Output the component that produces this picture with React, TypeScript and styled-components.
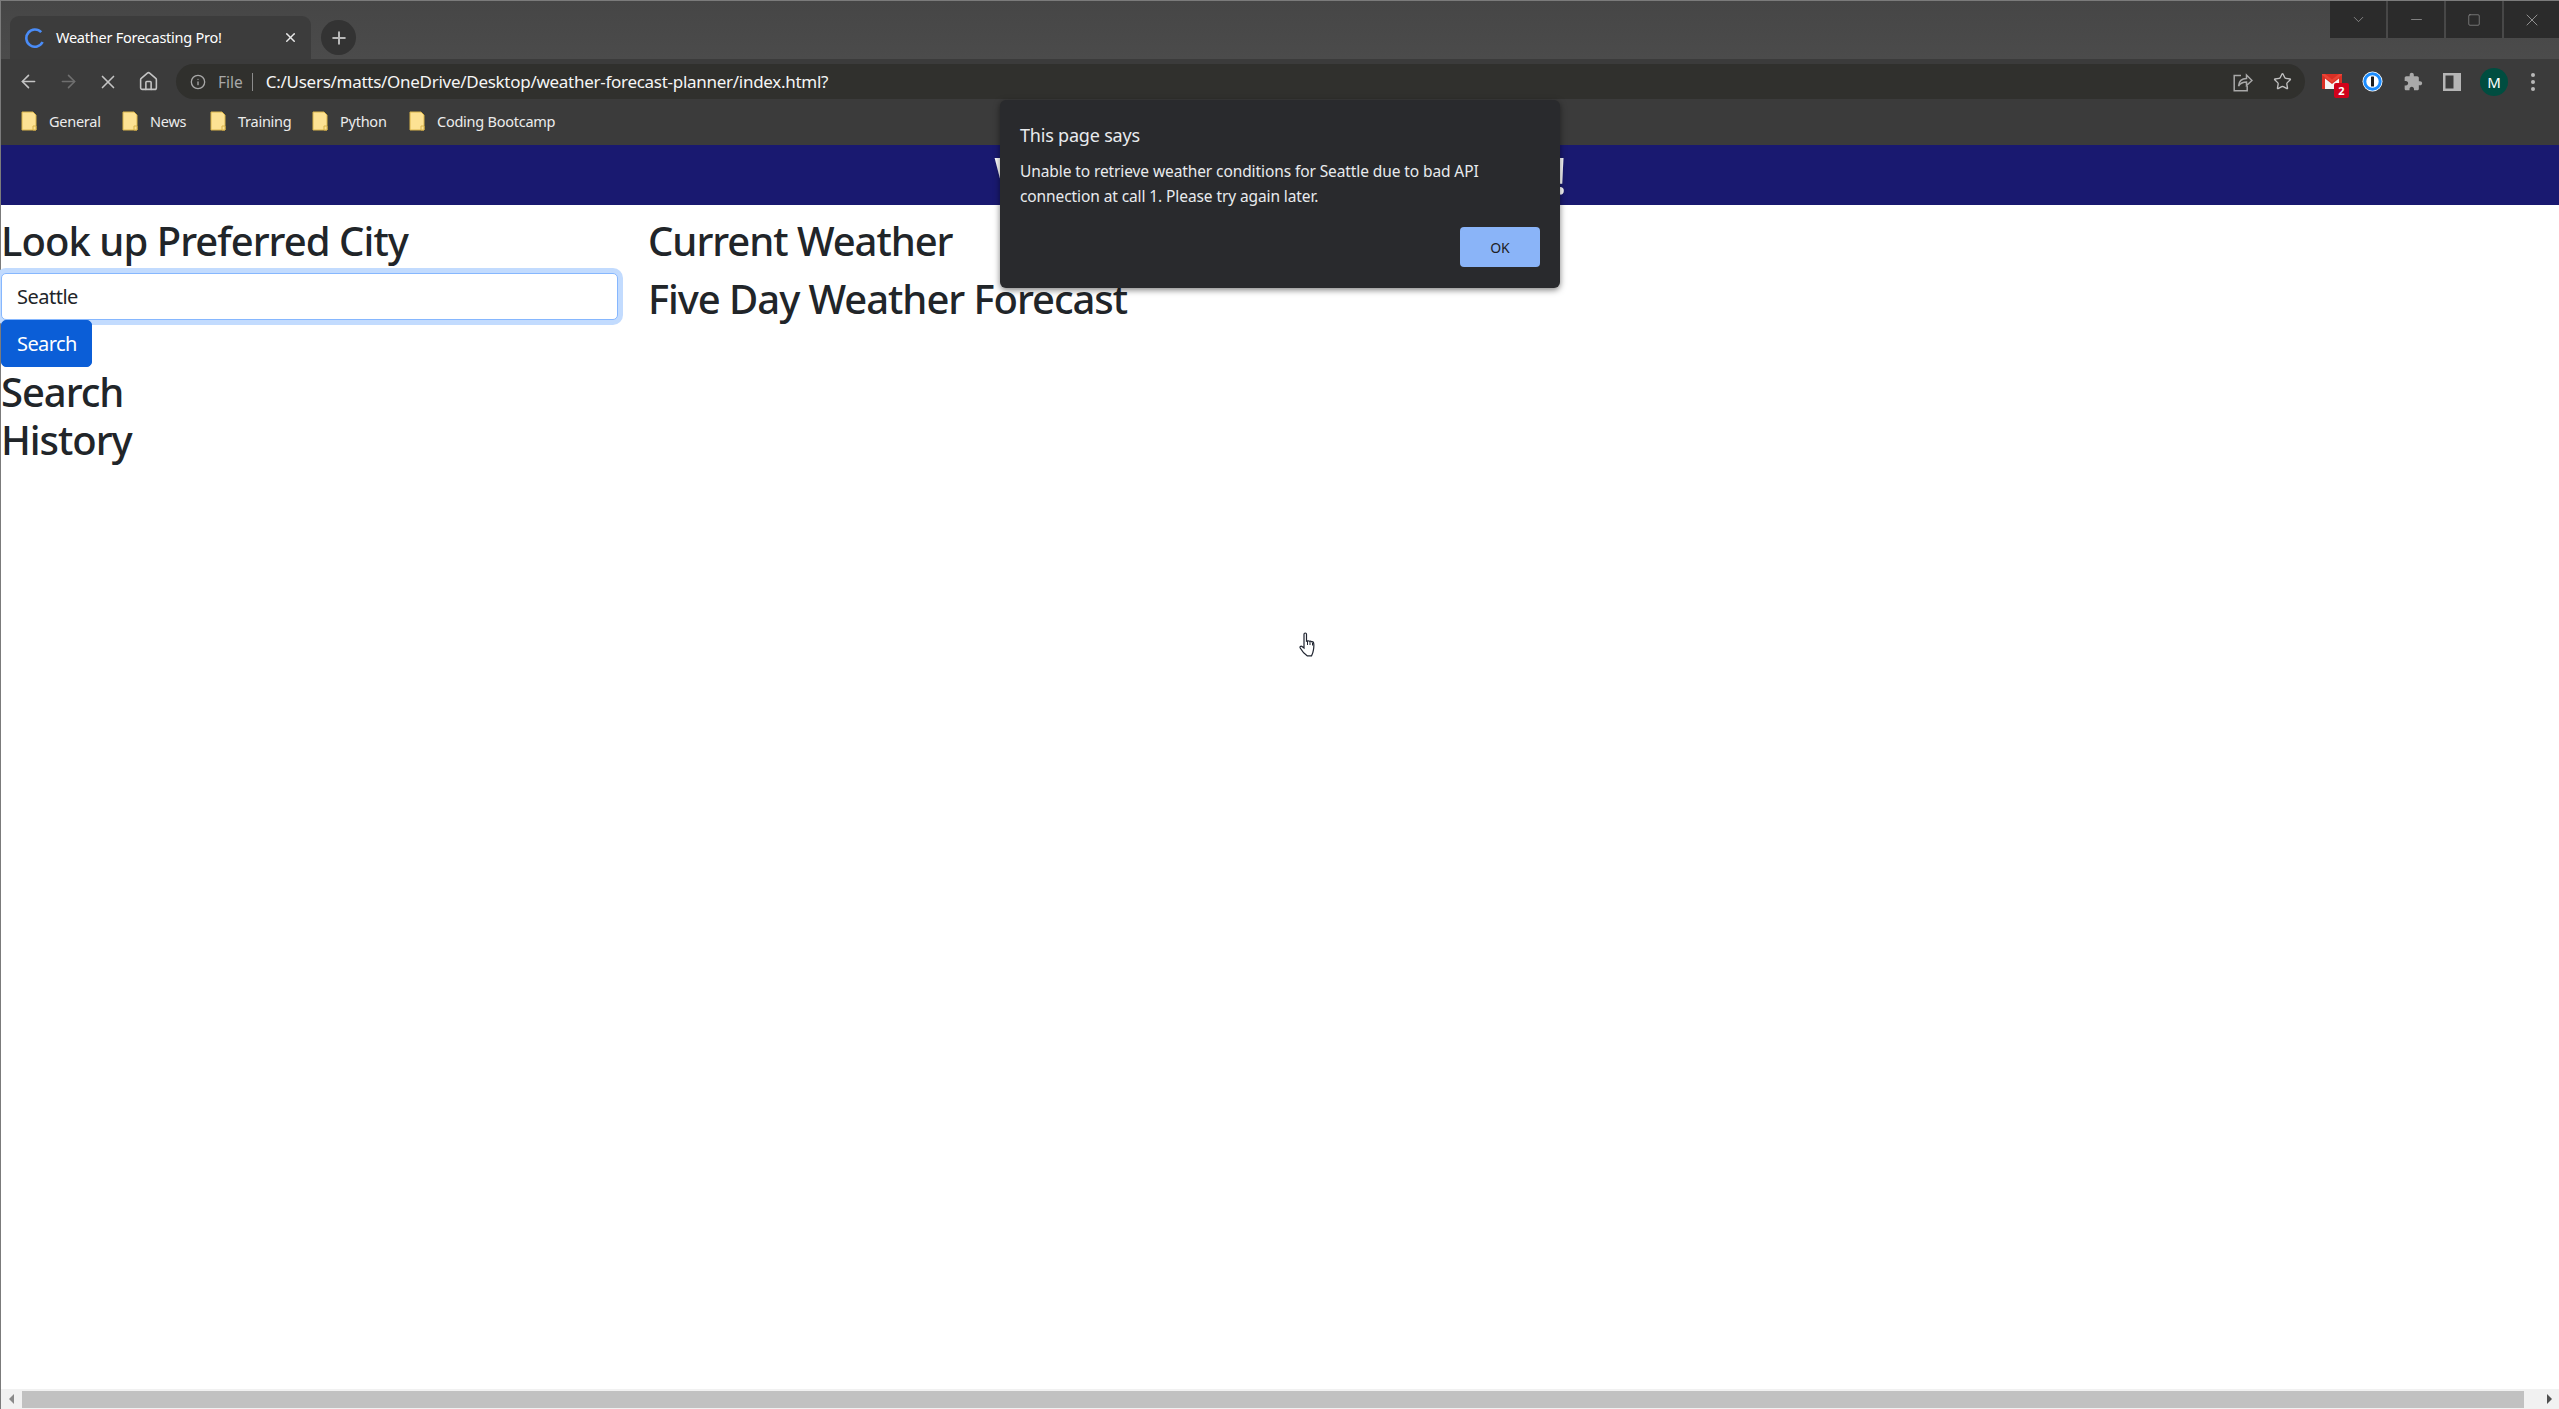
import styled, { createGlobalStyle } from 'styled-components';
import { ArrowLeft, ArrowRight, Plus, X, Star, Info, Home, Minus, ChevronDown, Square } from 'lucide-react';

const UI_FONT = `"Noto Sans", "Open Sans", Arial, sans-serif`;

const bookmarks = [
  { label: 'General', width: 101 },
  { label: 'News', width: 88 },
  { label: 'Training', width: 102 },
  { label: 'Python', width: 97 },
  { label: 'Coding Bootcamp', width: 148 },
];

function FolderIcon() {
  return (
    <svg width="16" height="20" viewBox="0 0 16 20">
      <path d="M1 1h11l3 3v15H1z" fill="#fde293" stroke="#d9b44a" strokeWidth="1" />
      <path d="M12 15h3v4h-3z" fill="#fde293" stroke="#d9b44a" strokeWidth="1" />
    </svg>
  );
}

function Spinner() {
  return (
    <svg width="20" height="20" viewBox="0 0 20 20" fill="none">
      <path d="M16.2 4.2A8.6 8.6 0 1 0 17.6 14" stroke="#4a8cf7" strokeWidth="2.6" />
    </svg>
  );
}

function ShareIcon() {
  return (
    <svg width="20" height="20" viewBox="0 0 20 20" fill="none" stroke="#a8a8a8" strokeWidth="1.5">
      <path d="M8 3.5H1.2v15.3h13v-5" />
      <path d="M5.5 14c.5-5 3.5-7.5 8-7.5V3l5.5 5.5-5.5 5v-3.6c-3.5 0-6 1-8 4.1z" />
    </svg>
  );
}

function GmailIcon() {
  return (
    <GmailWrap>
      <svg width="20" height="15" viewBox="0 0 20 15">
        <rect width="20" height="15" fill="#f4f4f4" />
        <path d="M0 0h20v15h-3V4.5L10 10 3 4.5V15H0z" fill="#d93025" />
        <path d="M0 0h3l7 5.5L17 0h3v1l-10 7.5L0 1z" fill="#ea4335" />
      </svg>
      <GmailBadge>2</GmailBadge>
    </GmailWrap>
  );
}

function OnePasswordIcon() {
  return (
    <svg width="21" height="21" viewBox="0 0 21 21">
      <circle cx="10.5" cy="10.5" r="10" fill="#fff" />
      <circle cx="10.5" cy="10.5" r="7.7" fill="none" stroke="#1a8cff" strokeWidth="3" />
      <rect x="9" y="5.5" width="3" height="10" rx="0.5" fill="#1d1d1d" />
    </svg>
  );
}

function ExtensionIcon() {
  return (
    <svg width="20" height="20" viewBox="0 0 24 24" fill="#a9a9a9">
      <path d="M20.5 11H19V7c0-1.1-.9-2-2-2h-4V3.5C13 2.12 11.88 1 10.5 1S8 2.12 8 3.5V5H4c-1.1 0-1.99.9-1.99 2v3.8H3.5c1.49 0 2.7 1.21 2.7 2.7s-1.21 2.7-2.7 2.7H2V20c0 1.1.9 2 2 2h3.8v-1.5c0-1.49 1.21-2.7 2.7-2.7 1.49 0 2.7 1.21 2.7 2.7V22H17c1.1 0 2-.9 2-2v-4h1.5c1.38 0 2.5-1.12 2.5-2.5S21.88 11 20.5 11z" />
    </svg>
  );
}

function SidePanelIcon() {
  return (
    <svg width="18" height="18" viewBox="0 0 18 18">
      <path d="M0 0h18v18H0z" fill="#b5b5b5" />
      <path d="M2.5 2.5h8v13h-8z" fill="#3b3b3b" />
    </svg>
  );
}

function HandCursor() {
  return (
    <svg width="20" height="25" viewBox="0 0 20 25" fill="#fff" stroke="#1f2430" strokeWidth="1.2">
      <path d="M5 2.2c0-1.6 2.5-1.6 2.5 0v7l1-.3c.8-.3 1.5 0 1.8.4.8-.4 1.7-.2 2.1.4.9-.4 2 .1 2.2 1.1.3 1.4.2 5.2-.2 7.4-.3 2-1.3 4.7-1.9 5.7H8.4C5.5 21.9 2.8 19 1.2 16c-.6-1.2.6-2.3 1.8-1.5L5 16z" />
      <path d="M8.5 9v4M11 9.5v3.5M13.5 10.5v3" fill="none" strokeWidth="1" />
    </svg>
  );
}

export default function App() {
  return (
    <Window>
      <GlobalStyle />
      <TabStrip>
        <Tab>
          <Spinner />
          <TabTitle>Weather Forecasting Pro!</TabTitle>
          <X size={15} color="#e8e8e8" strokeWidth={2.4} />
        </Tab>
        <NewTab>
          <Plus size={20} color="#b8b8b8" strokeWidth={2.4} />
        </NewTab>
        <WindowControls>
          <ControlButton $width={56}><ChevronDown size={17} strokeWidth={1} /></ControlButton>
          <ControlButton $width={56}><Minus size={17} strokeWidth={1} /></ControlButton>
          <ControlButton $width={56}><Square size={14} strokeWidth={1} /></ControlButton>
          <ControlButton $width={55}><X size={20} strokeWidth={1} /></ControlButton>
        </WindowControls>
      </TabStrip>
      <Toolbar>
        <NavButtons>
          <NavButton><ArrowLeft size={21} color="#c4c4c4" strokeWidth={1.8} /></NavButton>
          <NavButton><ArrowRight size={21} color="#6f6f6f" strokeWidth={1.8} /></NavButton>
          <NavButton><X size={22} color="#c4c4c4" strokeWidth={1.8} /></NavButton>
          <NavButton><Home size={21} color="#c4c4c4" strokeWidth={1.8} /></NavButton>
        </NavButtons>
        <AddressBar>
          <Info size={16} color="#a8a8a8" />
          <Scheme>File</Scheme>
          <Divider />
          <Url>C:/Users/matts/OneDrive/Desktop/weather-forecast-planner/index.html?</Url>
          <AddressActions>
            <ShareIcon />
            <Star size={19} color="#c0c0c0" strokeWidth={1.7} />
          </AddressActions>
        </AddressBar>
        <Extensions>
          <GmailIcon />
          <OnePasswordIcon />
          <ExtensionIcon />
          <SidePanelIcon />
          <Avatar>M</Avatar>
          <MenuDots><i /><i /><i /></MenuDots>
        </Extensions>
      </Toolbar>
      <BookmarkBar>
        {bookmarks.map((b) => (
          <Bookmark key={b.label} $width={b.width}>
            <FolderIcon />
            <span>{b.label}</span>
          </Bookmark>
        ))}
      </BookmarkBar>
      <Viewport>
        <PageHeader>Weather Forecasting Pro!</PageHeader>
        <Main>
          <SearchColumn>
            <SearchHeading>Look up Preferred City</SearchHeading>
            <CityInput defaultValue="Seattle" />
            <SearchButton>Search</SearchButton>
            <HistoryHeading>Search History</HistoryHeading>
          </SearchColumn>
          <ResultsColumn>
            <Heading>Current Weather</Heading>
            <Heading>Five Day Weather Forecast</Heading>
          </ResultsColumn>
        </Main>
        <Scrollbar>
          <ScrollArrow $dir="left" />
          <ScrollThumb />
          <ScrollArrow $dir="right" />
        </Scrollbar>
        <Cursor><HandCursor /></Cursor>
      </Viewport>
      <Dialog>
        <DialogTitle>This page says</DialogTitle>
        <DialogMessage>
          Unable to retrieve weather conditions for Seattle due to bad API connection at call 1. Please try again later.
        </DialogMessage>
        <DialogActions>
          <OkButton>OK</OkButton>
        </DialogActions>
      </Dialog>
    </Window>
  );
}

const GlobalStyle = createGlobalStyle`
  html, body {
    margin: 0;
    padding: 0;
    height: 100%;
    overflow: hidden;
    background: #fff;
  }
  * {
    box-sizing: border-box;
  }
`;

const Window = styled.div`
  position: relative;
  display: flex;
  flex-direction: column;
  height: 100vh;
  border-left: 1px solid #7b7b7b;
  border-top: 1px solid #7b7b7b;
  font-family: ${UI_FONT};
`;

const TabStrip = styled.div`
  display: flex;
  align-items: flex-start;
  height: 58px;
  padding: 15px 0 0 9px;
  background: linear-gradient(#464646, #4b4b4b);
`;

const Tab = styled.div`
  display: flex;
  align-items: center;
  width: 301px;
  height: 43px;
  padding: 0 13px 0 15px;
  background: #3c3c3c;
  border-radius: 9px 9px 0 0;
  color: #fff;
`;

const TabTitle = styled.span`
  flex: 1;
  margin: -2px 0 0 11px;
  font-size: 14.5px;
  letter-spacing: -0.25px;
  white-space: nowrap;
`;

const NewTab = styled.div`
  display: flex;
  align-items: center;
  justify-content: center;
  width: 35px;
  height: 35px;
  margin: 4px 0 0 10px;
  border-radius: 50%;
  background: #333;
`;

const WindowControls = styled.div`
  display: flex;
  gap: 2px;
  margin: -15px 0 0 auto;
`;

const ControlButton = styled.div<{ $width: number }>`
  display: flex;
  align-items: center;
  justify-content: center;
  width: ${(p) => p.$width}px;
  height: 37px;
  background: #2b2b2b;
  color: #a5a5a5;
`;

const Toolbar = styled.div`
  display: flex;
  align-items: center;
  height: 43px;
  padding-top: 2px;
  background: #3b3b3b;
`;

const NavButtons = styled.div`
  display: flex;
  padding-left: 7px;
`;

const NavButton = styled.div`
  display: flex;
  justify-content: center;
  width: 40px;
`;

const AddressBar = styled.div`
  display: flex;
  align-items: center;
  width: 2129px;
  height: 35px;
  margin-left: 8px;
  padding: 0 13px 0 14px;
  border-radius: 18px;
  background: #30302d;
`;

const Scheme = styled.span`
  margin-left: 12px;
  color: #a8a8a8;
  font-size: 15.5px;
`;

const Divider = styled.div`
  width: 1px;
  height: 18px;
  margin: 0 13px 0 9px;
  background: #8c8c8c;
`;

const Url = styled.span`
  color: #f5f5f5;
  font-size: 17px;
  letter-spacing: -0.28px;
  white-space: nowrap;
`;

const AddressActions = styled.div`
  display: flex;
  align-items: center;
  gap: 20px;
  margin-left: auto;
`;

const Extensions = styled.div`
  display: flex;
  align-items: center;
  gap: 20px;
  margin-left: 16px;
`;

const GmailWrap = styled.div`
  position: relative;
  display: flex;
  margin-left: 1px;
`;

const GmailBadge = styled.span`
  position: absolute;
  right: -7px;
  bottom: -9px;
  width: 15px;
  height: 15px;
  border-radius: 2px;
  background: #d0021b;
  color: #fff;
  font-size: 11px;
  font-weight: 700;
  line-height: 15px;
  text-align: center;
`;

const Avatar = styled.div`
  width: 28px;
  height: 28px;
  margin-left: -1px;
  border-radius: 50%;
  background: #004d40;
  color: #fff;
  font-size: 15px;
  line-height: 28px;
  text-align: center;
`;

const MenuDots = styled.div`
  display: flex;
  flex-direction: column;
  gap: 3px;
  margin-left: 3px;

  i {
    display: block;
    width: 4px;
    height: 4px;
    border-radius: 50%;
    background: #b8b8b8;
  }
`;

const BookmarkBar = styled.div`
  display: flex;
  align-items: center;
  height: 43px;
  padding: 0 0 6px 20px;
  background: #3b3b3b;
`;

const Bookmark = styled.div<{ $width: number }>`
  display: flex;
  align-items: center;
  gap: 12px;
  width: ${(p) => p.$width}px;
  color: #ececec;
  font-size: 14.5px;
  letter-spacing: -0.25px;
  white-space: nowrap;
`;

const Viewport = styled.div`
  position: relative;
  flex: 1;
  display: flex;
  flex-direction: column;
  min-height: 0;
  background: #fff;
  color: #212529;
`;

const PageHeader = styled.h1`
  margin: 0;
  height: 60px;
  background: #191970;
  color: #fff;
  font-size: 50px;
  font-weight: 500;
  line-height: 60px;
  letter-spacing: -1.3px;
  text-align: center;
`;

const Main = styled.div`
  flex: 1;
  display: flex;
  padding-top: 12px;
`;

const SearchColumn = styled.section`
  display: flex;
  flex-direction: column;
  align-items: flex-start;
  width: 617px;
`;

const ResultsColumn = styled.section`
  margin-left: 30px;
`;

const Heading = styled.h2`
  margin: 0 0 10px;
  font-size: 40px;
  font-weight: 500;
  line-height: 48px;
  letter-spacing: -1.05px;
  white-space: nowrap;
`;

const SearchHeading = styled(Heading)`
  margin-bottom: 8px;
  letter-spacing: -0.95px;
`;

const HistoryHeading = styled(Heading)`
  width: 200px;
  margin: 1px 0 0;
  white-space: normal;
`;

const CityInput = styled.input`
  width: 100%;
  height: 47px;
  padding: 0 15px;
  border: 1px solid #86b7fe;
  border-radius: 5px;
  outline: none;
  box-shadow: 0 0 0 5px #c2dbfe;
  color: #212529;
  font-family: inherit;
  font-size: 20px;
  letter-spacing: -0.5px;
`;

const SearchButton = styled.button`
  position: relative;
  height: 47px;
  padding: 0 14px 0 15px;
  border: 1px solid #0b5ed7;
  border-radius: 5px;
  background: #0b5ed7;
  color: #fff;
  font-family: inherit;
  font-size: 20px;
  letter-spacing: -0.6px;
`;

const Scrollbar = styled.div`
  display: flex;
  align-items: center;
  height: 20px;
  flex-shrink: 0;
  padding: 0 7px 0 8px;
  background: #f1f1f1;
`;

const ScrollThumb = styled.div`
  flex: 1;
  height: 17px;
  margin: 0 23px 0 8px;
  background: #c1c1c1;
`;

const ScrollArrow = styled.div<{ $dir: 'left' | 'right' }>`
  width: 0;
  height: 0;
  border-top: 5px solid transparent;
  border-bottom: 5px solid transparent;
  ${(p) => (p.$dir === 'left' ? 'border-right: 5px solid #8a8a8a;' : 'border-left: 5px solid #505050;')}
`;

const Cursor = styled.div`
  position: absolute;
  left: 1298px;
  top: 487px;
  display: flex;
`;

const Dialog = styled.div`
  position: absolute;
  left: 999px;
  top: 99px;
  width: 560px;
  height: 188px;
  padding: 23px 20px 0;
  border-radius: 6px;
  background: #292a2d;
  box-shadow: 0 2px 6px rgba(0, 0, 0, 0.5);
  color: #e8eaed;
`;

const DialogTitle = styled.div`
  font-size: 18px;
  line-height: 24px;
  letter-spacing: -0.2px;
`;

const DialogMessage = styled.div`
  width: 480px;
  margin-top: 12px;
  font-size: 15.5px;
  line-height: 25px;
  letter-spacing: -0.1px;
`;

const DialogActions = styled.div`
  display: flex;
  justify-content: flex-end;
  margin-top: 18px;
`;

const OkButton = styled.button`
  width: 80px;
  height: 40px;
  border: 0;
  border-radius: 4px;
  background: #8ab4f8;
  color: #202124;
  font-family: inherit;
  font-size: 14px;
`;
